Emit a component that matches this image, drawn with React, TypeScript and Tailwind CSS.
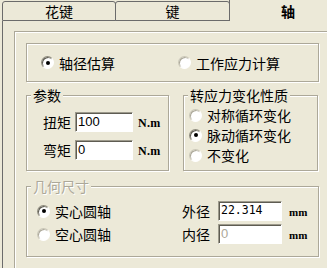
import React from "react";

function Radio({ checked, label }: { checked?: boolean; label: string }) {
  return (
    <div className="flex items-center gap-[5px] h-[20px]">
      <span
        className={
          checked
            ? "w-[13px] h-[13px] rounded-full bg-white border border-t-[#8e8b7d] border-l-[#8e8b7d] border-r-white border-b-white shadow-[inset_1px_1px_0_#5e5c52] flex items-center justify-center shrink-0"
            : "w-[13px] h-[13px] rounded-full bg-white border border-t-[#c9c6b6] border-l-[#c9c6b6] border-r-white border-b-white shadow-[inset_1px_1px_0_#aca899] flex items-center justify-center shrink-0"
        }
      >
        {checked && <span className="w-[4px] h-[4px] rounded-full bg-black" />}
      </span>
      <span className="leading-[20px] whitespace-nowrap">{label}</span>
    </div>
  );
}

function Field({
  w,
  value,
  disabled,
  mono,
}: {
  w: string;
  value: string;
  disabled?: boolean;
  mono?: boolean;
}) {
  return (
    <div
      className={
        w +
        " h-[20px] shrink-0 border border-t-[#9d9a8c] border-l-[#9d9a8c] border-r-white border-b-white"
      }
    >
      <div
        className={
          "h-full bg-white shadow-[inset_1px_1px_0_#5e5c52] flex items-center pl-[2px] " +
          (mono
            ? "font-['DejaVu_Sans_Mono',monospace] text-[11.5px] "
            : "font-['Liberation_Sans',sans-serif] text-[13px] ") +
          (disabled ? "text-[#aca899]" : "text-black")
        }
      >
        {value}
      </div>
    </div>
  );
}

function Group({
  className,
  label,
  disabled,
  children,
}: {
  className: string;
  label: string;
  disabled?: boolean;
  children?: React.ReactNode;
}) {
  return (
    <div
      className={
        className +
        " relative shrink-0 border border-[#aca899] shadow-[inset_1px_1px_0_#ffffff,1px_1px_0_#ffffff]"
      }
    >
      <span
        className={
          "absolute -top-[11px] left-[4px] px-[2px] bg-[#ece9d8] leading-[20px] whitespace-nowrap " +
          (disabled ? "text-[#aca899] [text-shadow:1px_1px_0_#ffffff]" : "text-black")
        }
      >
        {label}
      </span>
      {children}
    </div>
  );
}

function ParamRow({ label, value }: { label: string; value: string }) {
  return (
    <div className="flex items-center h-[20px]">
      <span className="w-[28px] leading-[20px] whitespace-nowrap">{label}</span>
      <div className="ml-[4px]">
        <Field w="w-[58px]" value={value} />
      </div>
      <span className="ml-[5px] mt-[1px] font-['Liberation_Serif',serif] font-bold text-[12px] tracking-[0.3px] leading-none">
        N.m
      </span>
    </div>
  );
}

export default function App() {
  return (
    <div className="w-[327px] h-[268px] overflow-hidden bg-[#ece9d8] text-black text-[14px] font-['Noto_Sans_CJK_SC','Noto_Sans',sans-serif]">
      {/* tabs */}
      <div className="flex h-[21px] pl-[2px]">
        <div className="shrink-0 mt-[1px] w-[114px] h-[20px] border border-[#6b6b6b] rounded-t-[3px] flex items-center justify-center leading-none">
          花键
        </div>
        <div className="shrink-0 -ml-px mt-[1px] w-[115px] h-[20px] border border-[#6b6b6b] rounded-t-[3px] flex items-center justify-center leading-none">
          键
        </div>
        <div className="shrink-0 -ml-px w-[117px] h-[21px] border-l border-[#6b6b6b] flex items-center justify-center font-bold leading-none pt-[1px]">
          轴
        </div>
      </div>

      {/* panel */}
      <div className="ml-[2px] h-[247px] border-l border-[#6b6b6b] pl-[11px] pt-[10px]">
        <div className="w-[330px] h-[250px] border-l border-t border-[#aca899] shadow-[inset_1px_1px_0_#ffffff] pl-[11px] pt-[11px]">
          {/* calc mode */}
          <div className="w-[293px] h-[39px] border border-[#aca899] shadow-[inset_1px_1px_0_#ffffff,1px_1px_0_#ffffff] flex items-center">
            <div className="ml-[14px]">
              <Radio checked label="轴径估算" />
            </div>
            <div className="ml-[63px]">
              <Radio label="工作应力计算" />
            </div>
          </div>

          {/* params + stress */}
          <div className="flex mt-[13px]">
            <Group className="w-[143px] h-[76px]" label="参数">
              <div className="pt-[16px] pl-[16px] flex flex-col gap-[8px]">
                <ParamRow label="扭矩" value="100" />
                <ParamRow label="弯矩" value="0" />
              </div>
            </Group>
            <Group className="ml-[14px] w-[135px] h-[76px]" label="转应力变化性质">
              <div className="pt-[9px] pl-[5px] flex flex-col">
                <Radio label="对称循环变化" />
                <Radio checked label="脉动循环变化" />
                <Radio label="不变化" />
              </div>
            </Group>
          </div>

          {/* geometry */}
          <Group className="mt-[15px] w-[293px] h-[71px]" label="几何尺寸" disabled>
            <div className="pt-[14px] pl-[10px] flex flex-col gap-[3px]">
              <div className="flex items-center h-[20px]">
                <div className="w-[145px] shrink-0">
                  <Radio checked label="实心圆轴" />
                </div>
                <span className="w-[28px] leading-[20px] whitespace-nowrap">外径</span>
                <div className="ml-[8px]">
                  <Field w="w-[64px]" value="22.314" mono />
                </div>
                <span className="ml-[7px] mt-[3px] font-['Liberation_Serif',serif] font-bold text-[11px] leading-none">
                  mm
                </span>
              </div>
              <div className="flex items-center h-[20px]">
                <div className="w-[145px] shrink-0">
                  <Radio label="空心圆轴" />
                </div>
                <span className="w-[28px] leading-[20px] whitespace-nowrap">内径</span>
                <div className="ml-[8px]">
                  <Field w="w-[64px]" value="0" disabled />
                </div>
                <span className="ml-[7px] mt-[3px] font-['Liberation_Serif',serif] font-bold text-[11px] leading-none">
                  mm
                </span>
              </div>
            </div>
          </Group>
        </div>
      </div>
    </div>
  );
}
